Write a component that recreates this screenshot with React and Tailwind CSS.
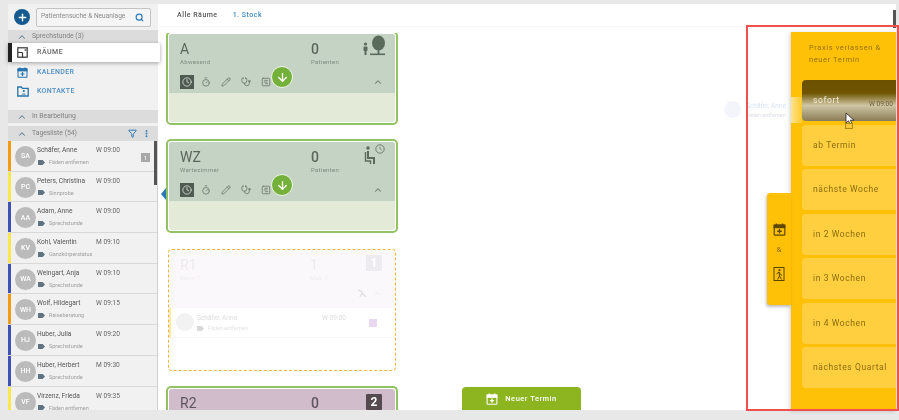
import React from 'react';
import { Search, Plus, ChevronUp, Filter, EllipsisVertical, Timer, Pencil, Stethoscope, SquareChartGantt, ArrowDown, Clock } from 'lucide-react';

const font = { fontFamily: 'Roboto, "Liberation Sans", sans-serif' };

const patients = [
  ['SA', 'Schäfer, Anne', 'W 09:00', 'Fäden entfernen', 'bg-[#f39c12]', true],
  ['PC', 'Peters, Christina', 'W 09:00', 'Sinnprobe', 'bg-[#fde74c]'],
  ['AA', 'Adam, Anne', 'W 09:00', 'Sprechstunde', 'bg-[#3f51b5]'],
  ['KV', 'Kohl, Valentin', 'M 09:10', 'Ganzkörperstatus', 'bg-[#fde74c]'],
  ['WA', 'Weingart, Anja', 'W 09:10', 'Sprechstunde', 'bg-[#3f51b5]'],
  ['WH', 'Wolf, Hildegart', 'W 09:15', 'Reiseberatung', 'bg-[#f39c12]'],
  ['HJ', 'Huber, Julia', 'W 09:20', 'Sprechstunde', 'bg-[#3f51b5]'],
  ['HH', 'Huber, Herbert', 'M 09:30', 'Sprechstunde', 'bg-[#3f51b5]'],
  ['VF', 'Virzenz, Frieda', 'W 09:35', 'Fäden entfernen', 'bg-[#fde74c]'],
];

function TagIcon({ color = '#5f7380' }) {
  return (
    <svg width="7" height="5" viewBox="0 0 7 5" className="mr-[4px] shrink-0">
      <path d="M0 0h4.6L7 2.5 4.6 5H0z" fill={color} />
    </svg>
  );
}

function CalIcon({ color, size = 13 }) {
  return (
    <svg width={size} height={size} viewBox="0 0 13 13" fill="none" stroke={color} strokeWidth="1.2">
      <rect x="1.2" y="2.2" width="10.6" height="10" rx="0.8" />
      <rect x="1.2" y="2.2" width="10.6" height="2.4" fill={color} />
      <path d="M3.5 0.5v2M9.5 0.5v2" strokeWidth="1.4" />
      <path d="M6.5 6v4.6M4.2 8.3h4.6" strokeWidth="1.4" />
    </svg>
  );
}

function RoomsIcon() {
  return (
    <svg width="11" height="11" viewBox="0 0 11 11" fill="none" stroke="#333" strokeWidth="1.2">
      <rect x="0.8" y="0.8" width="9.4" height="9.4" />
      <path d="M0.8 5.5h4.7M5.5 5.5v4.7" />
      <path d="M7.5 3h2" />
    </svg>
  );
}

function ContactsIcon() {
  return (
    <svg width="12" height="11" viewBox="0 0 12 11" fill="none" stroke="#2673ae" strokeWidth="1.3">
      <path d="M0.8 1h3.6l1 1.3h5.8v7.7H0.8z" />
      <circle cx="6.8" cy="5" r="1.1" fill="#2673ae" stroke="none" />
      <path d="M4.6 8.6c.3-1.6 4-1.6 4.4 0z" fill="#2673ae" stroke="none" />
    </svg>
  );
}

function SectionHead({ children, right, className = '' }) {
  return (
    <div className={`flex items-center bg-[#dcdcdc] pl-[9px] pr-[7px] text-[6.8px] text-[#808080] ${className}`}>
      <ChevronUp size={10} strokeWidth={2.5} className="text-[#5f7f8f]" />
      <span className="ml-[5px] flex-1">{children}</span>
      {right}
    </div>
  );
}

function PatientRow({ p }) {
  const [ini, name, time, tag, color, badge] = p;
  return (
    <div className="relative flex h-[30.7px] shrink-0 border-b border-[#d8d8d8] bg-[#f1f1f1]">
      <div className={`w-[3px] shrink-0 ${color}`} />
      <div className="ml-[4px] mt-[5px] flex h-[21px] w-[21px] shrink-0 items-center justify-center rounded-full bg-[#bbbbbb] text-[7px] font-medium text-white">{ini}</div>
      <div className="ml-[1px] mt-[3px] w-[59px] shrink-0">
        <div className="whitespace-nowrap text-[6.6px] leading-[12px] text-[#555]">{name}</div>
        <div className="mt-[1px] flex items-center whitespace-nowrap pl-[1px] text-[5.5px] leading-[10px] text-[#a0a0a0]">
          <TagIcon />{tag}
        </div>
      </div>
      <div className="mt-[3px] whitespace-nowrap text-[6.6px] leading-[12px] text-[#666]">{time}</div>
      {badge && <div className="absolute left-[133px] top-[12px] flex h-[9px] w-[9px] items-center justify-center bg-[#a8a8a8] text-[6px] text-white">1</div>}
    </div>
  );
}

function TreeIcon() {
  return (
    <svg width="24" height="22" viewBox="0 0 24 22" fill="#5a6b5c">
      <ellipse cx="16.5" cy="8" rx="6.5" ry="7.5" />
      <rect x="15.6" y="12" width="1.8" height="7" />
      <rect x="8" y="18.5" width="15" height="1.6" />
      <circle cx="3.5" cy="9" r="1.6" />
      <rect x="1.5" y="11.5" width="4" height="4.5" rx="1" />
      <rect x="2.5" y="15" width="2" height="5" />
    </svg>
  );
}

function WaitIcon() {
  return (
    <svg width="22" height="24" viewBox="0 0 22 24" fill="none" stroke="#5a6b5c" strokeWidth="1.4">
      <circle cx="16" cy="6" r="4.2" strokeWidth="0.8" />
      <path d="M16 3.8V6l1.5 1" strokeWidth="0.7" />
      <circle cx="4" cy="5" r="1.7" fill="#5a6b5c" stroke="none" />
      <path d="M4 8v7h6v6" strokeWidth="2" />
      <path d="M1.5 9v9h5v3" />
    </svg>
  );
}

function IconRow() {
  return (
    <div className="relative mt-[10px] flex items-center pl-[11px] pr-[12px]">
      <div className="flex h-[14px] w-[14px] items-center justify-center bg-[#4f5b50] text-[#d8e0d6]">
        <Clock size={10} />
      </div>
      <div className="ml-[7px] flex items-center gap-[10px] text-[#6d7a6c]">
        <Timer size={10} />
        <Pencil size={10} />
        <Stethoscope size={10} />
        <SquareChartGantt size={10} />
      </div>
      <div className="absolute left-[102px] top-[-9px] flex h-[22px] w-[22px] items-center justify-center rounded-full border-[1.5px] border-[#eef4e6] bg-[#74b13a] text-white">
        <ArrowDown size={13} strokeWidth={2.5} />
      </div>
      <ChevronUp size={10} strokeWidth={2.5} className="ml-auto text-[#6d7a6c]" />
    </div>
  );
}

function RoomCard({ title, label, count, icon, className = '' }) {
  return (
    <div className={`h-[94px] w-[232px] shrink-0 rounded-[5px] border-2 border-[#93c264] bg-white p-px ${className}`}>
      <div className="flex h-full flex-col overflow-hidden rounded-[3px] bg-[#e3ebd8]">
        <div className="h-[59px] bg-[#c5d3c4]">
          <div className="relative flex pl-[11px] pt-[6px]">
            <div className="w-[131px]">
              <div className="text-[14px] leading-[18px] text-[#5a665a]">{title}</div>
              <div className="text-[6px] leading-[7px] tracking-[0.3px] text-[#7f8b7f]">{label}</div>
            </div>
            <div>
              <div className="text-[14px] font-medium leading-[18px] text-[#5a665a]">{count}</div>
              <div className="text-[6px] leading-[7px] tracking-[0.3px] text-[#7f8b7f]">Patienten</div>
            </div>
            <div className="absolute right-[9px] top-[1px]">{icon}</div>
          </div>
          <IconRow />
        </div>
      </div>
    </div>
  );
}

function OptionButton({ children, active }) {
  return (
    <div className={`flex h-[41px] items-center whitespace-nowrap rounded-l-[4px] pl-[11px] text-[8.5px] tracking-[0.6px] ${active ? 'bg-[linear-gradient(180deg,#6a5000_0%,#6f5502_32%,#cfc6a4_62%,#8a7c55_100%)] text-[#f4ecd6]' : 'bg-[#ffcf40] text-[#8a6d10]'}`}>
      {children}
    </div>
  );
}

export default function App() {
  return (
    <div style={font} className="relative flex h-[420px] w-[899px] overflow-hidden bg-[#e8e8e8] pb-[10px] pl-[8px] pr-[3px] pt-[4px] blur-[0.4px]">
      {/* Sidebar */}
      <aside className="relative flex w-[150px] shrink-0 flex-col bg-[#f1f1f1]">
        <div className="flex h-[26px] shrink-0 items-center pl-[6px] pr-[7px]">
          <div className="flex h-[16px] w-[16px] shrink-0 items-center justify-center rounded-full bg-[#14598f] text-white">
            <Plus size={11} strokeWidth={3} />
          </div>
          <div className="ml-[6px] flex h-[19px] flex-1 items-center rounded-[2px] border border-[#c4c4c4] bg-[#f5f5f5] pl-[4px] pr-[6px]">
            <span className="flex-1 whitespace-nowrap text-[6.6px] text-[#8a8a8a]">Patientensuche &amp; Neuanlage</span>
            <Search size={9} strokeWidth={3} className="text-[#2b77b5]" />
          </div>
        </div>
        <SectionHead className="h-[13px] shrink-0">Sprechstunde (3)</SectionHead>
        <div className="relative z-10 mr-[-2px] flex h-[19px] shrink-0 items-center border-l-[4px] border-[#222] bg-white pl-[5px] shadow-[0_1px_4px_rgba(0,0,0,0.35)]">
          <RoomsIcon />
          <span className="ml-[9px] text-[7px] font-medium tracking-[0.5px] text-[#666]">RÄUME</span>
        </div>
        <div className="flex h-[48px] shrink-0 flex-col pl-[9px] pt-[1px]">
          <div className="flex h-[19px] items-center">
            <CalIcon color="#2673ae" size={11} />
            <span className="ml-[9px] text-[7px] font-medium tracking-[0.3px] text-[#4b8fc4]">KALENDER</span>
          </div>
          <div className="flex h-[19px] items-center">
            <ContactsIcon />
            <span className="ml-[8px] text-[7px] font-medium tracking-[0.3px] text-[#4b8fc4]">KONTAKTE</span>
          </div>
        </div>
        <SectionHead className="h-[13px] shrink-0">In Bearbeitung</SectionHead>
        <SectionHead
          className="mt-[3px] h-[15px] shrink-0"
          right={
            <div className="flex items-center gap-[5px] text-[#2a78b5]">
              <Filter size={9} strokeWidth={2.5} />
              <EllipsisVertical size={9} strokeWidth={3} />
            </div>
          }
        >
          Tagesliste (54)
        </SectionHead>
        <div className="relative flex flex-1 flex-col overflow-hidden border-r border-[#d0d0d0]">
          {patients.map((p) => <PatientRow key={p[0] + p[1]} p={p} />)}
          <div className="absolute right-0 top-0 h-[44px] w-[3px] bg-[#555]" />
        </div>
      </aside>

      {/* Main */}
      <main className="relative flex min-w-0 flex-1 flex-col bg-white">
        <div className="flex h-[22px] shrink-0 items-center gap-[15px] pl-[19px] text-[7px] font-medium tracking-[0.5px]">
          <span className="text-[#555]">Alle Räume</span>
          <span className="text-[#3c8ac4]">1. Stock</span>
        </div>
        <div className="mx-[2px] h-px shrink-0 bg-[#f5f5f5]" />
        <div className="h-[6px] shrink-0" />
        <div className="flex min-h-0 flex-1 flex-col gap-[14px] overflow-hidden pl-[8px]">
          <RoomCard title="A" label="Abwesend" count="0" icon={<TreeIcon />} className="mt-[-2px]" />
          <RoomCard title="WZ" label="Wartezimmer" count="0" icon={<WaitIcon />} />
          <div className="ml-[2px] mt-[2px] h-[122px] w-[228px] shrink-0 overflow-hidden rounded-[4px] border border-dashed border-[#f5b638] bg-white">
            <div className="relative h-[58px] bg-[#faf6fb] pl-[11px] pt-[6px] opacity-70">
              <div className="flex">
                <div className="w-[130px]">
                  <div className="text-[14px] leading-[18px] text-[#e5e0e6]">R1</div>
                  <div className="text-[6px] leading-[8px] text-[#e9e4ea]">Raum 1</div>
                </div>
                <div>
                  <div className="text-[14px] leading-[18px] text-[#e5e0e6]">1</div>
                  <div className="text-[6px] leading-[8px] text-[#e9e4ea]">Max. 1</div>
                </div>
              </div>
              <div className="absolute right-[13px] top-[5px] flex h-[16px] w-[16px] items-center justify-center bg-[#e6e3e8] text-[12px] font-bold text-white">1</div>
              <svg className="absolute bottom-[10px] right-[28px]" width="9" height="9" viewBox="0 0 9 9" fill="none" stroke="#cfcfcf" strokeWidth="1.2">
                <path d="M0 1l3 1 2 3 3 3M4 4L2 8" />
              </svg>
              <ChevronUp size={9} className="absolute bottom-[10px] right-[13px] text-[#ddd]" />
            </div>
            <div className="flex h-[30px] border-b border-l-2 border-b-[#f7f7f7] border-l-[#fdeaa8] pl-[5px] pt-[5px]">
              <div className="h-[18px] w-[18px] rounded-full bg-[#f2f2f2]" />
              <div className="ml-[3px] w-[125px]">
                <div className="text-[6.6px] leading-[10px] text-[#dcdcdc]">Schäfer, Anne</div>
                <div className="mt-[1px] flex items-center text-[5.5px] leading-[9px] text-[#e3e3e3]"><TagIcon color="#d8d8d8" />Fäden entfernen</div>
              </div>
              <div className="w-[47px] text-[6.6px] leading-[10px] text-[#dcdcdc]">W 09:00</div>
              <div className="mt-[6px] h-[8px] w-[8px] bg-[#ead7f2]" />
            </div>
          </div>
          <div className="mt-px w-[232px] shrink-0 rounded-t-[5px] border-2 border-b-0 border-[#93c264] p-px">
            <div className="relative flex h-[40px] rounded-t-[3px] bg-[#d1bccb] pl-[11px] pt-[8px]">
              <div className="w-[131px] text-[14px] leading-[13px] text-[#5e5560]">R2</div>
              <div className="text-[14px] font-medium leading-[13px] text-[#5e5560]">0</div>
              <div className="absolute right-[13px] top-[5px] flex h-[16px] w-[16px] items-center justify-center rounded-[1px] bg-[#544a50] text-[12px] font-bold text-white">2</div>
            </div>
          </div>
        </div>

        {/* Sidebar toggle */}
        <div className="absolute left-[3px] top-[184px] h-0 w-0 border-y-[6px] border-r-[5px] border-y-transparent border-r-[#2a78b5]" />

        {/* New appointment */}
        <div className="absolute bottom-0 left-[304px] flex h-[23px] w-[119px] items-center justify-center rounded-t-[4px] bg-[#8db51f] text-white">
          <CalIcon color="#ffffff" size={12} />
          <span className="ml-[7px] text-[7.5px] font-medium tracking-[0.5px]">Neuer Termin</span>
        </div>

        {/* Main scrollbar */}
        <div className="absolute right-0 top-[6px] h-[18px] w-[3px] bg-[#555]" />

        {/* Drag ghost */}
        <div className="absolute left-[566px] top-[97px] flex opacity-60">
          <div className="h-[17px] w-[17px] rounded-full bg-[#eef0f8]" />
          <div className="ml-[5px]">
            <div className="whitespace-nowrap text-[6.6px] leading-[10px] text-[#bcd0ee]">Schäfer, Anne</div>
            <div className="whitespace-nowrap text-[5.5px] leading-[9px] text-[#c4c8d4]">Fäden entfernen</div>
          </div>
        </div>

        {/* Option panel */}
        <div className="absolute bottom-0 left-[633px] right-0 top-[28px] bg-[#ffc107] pl-[11px] shadow-[-1px_1px_4px_rgba(0,0,0,0.2)]">
          <div className="pl-[7px] pt-[10px] text-[7.5px] leading-[11.5px] tracking-[0.6px] text-[#93740a]">
            Praxis verlassen &amp;<br />neuer Termin
          </div>
          <div className="mt-[15px] flex flex-col gap-[3.5px]">
            <OptionButton active>sofort</OptionButton>
            <OptionButton>ab Termin</OptionButton>
            <OptionButton>nächste Woche</OptionButton>
            <OptionButton>in 2 Wochen</OptionButton>
            <OptionButton>in 3 Wochen</OptionButton>
            <OptionButton>in 4 Wochen</OptionButton>
            <OptionButton>nächstes Quartal</OptionButton>
          </div>
        </div>
        {/* Ghost highlight crossing the panel edge */}
        <div className="absolute left-[633px] top-[93px] h-[26px] w-[11px] bg-[linear-gradient(90deg,rgba(255,255,255,0.55),rgba(255,255,255,0.15))]" />
        <div className="absolute left-[609px] top-[189px] flex h-[112px] w-[24px] flex-col items-center rounded-l-[3px] bg-[#ffc107] pt-[30px] shadow-[-1px_2px_3px_rgba(0,0,0,0.25)]">
          <CalIcon color="#5c4700" />
          <span className="mt-[9px] text-[8px] leading-[10px] text-[#8a6d10]">&amp;</span>
          <svg className="mt-[12px]" width="12" height="15" viewBox="0 0 12 15" fill="none" stroke="#5c4700" strokeWidth="1">
            <rect x="1" y="0.5" width="10" height="13" />
            <circle cx="6.5" cy="3.2" r="1.1" fill="#5c4700" stroke="none" />
            <path d="M3.5 7l2.5-2 1.5 2.5 1.5 1M6 5l.5 4-2 3.5M6.5 9l2 3.5" />
          </svg>
        </div>

        {/* Ghost time on active button */}
        <span className="absolute left-[711px] top-[96px] whitespace-nowrap text-[6.6px] text-[#6e6445]">W 09:00</span>

        {/* Cursor */}
        <svg className="absolute left-[687px] top-[108px]" width="10" height="14" viewBox="0 0 10 14">
          <path d="M1 1v10l2.6-2.2L5.4 13l1.8-.8-1.8-4H9z" fill="#fff" stroke="#222" strokeWidth="0.8" />
        </svg>
        <div className="absolute left-[687px] top-[119px] h-[6px] w-[8px] border border-[#b08a10] bg-[#f7c93a]" />
      </main>

      {/* Annotation frame */}
      <div className="pointer-events-none absolute left-[746px] top-[25px] h-[386px] w-[153px] border-2 border-[#f25050]" />
    </div>
  );
}
